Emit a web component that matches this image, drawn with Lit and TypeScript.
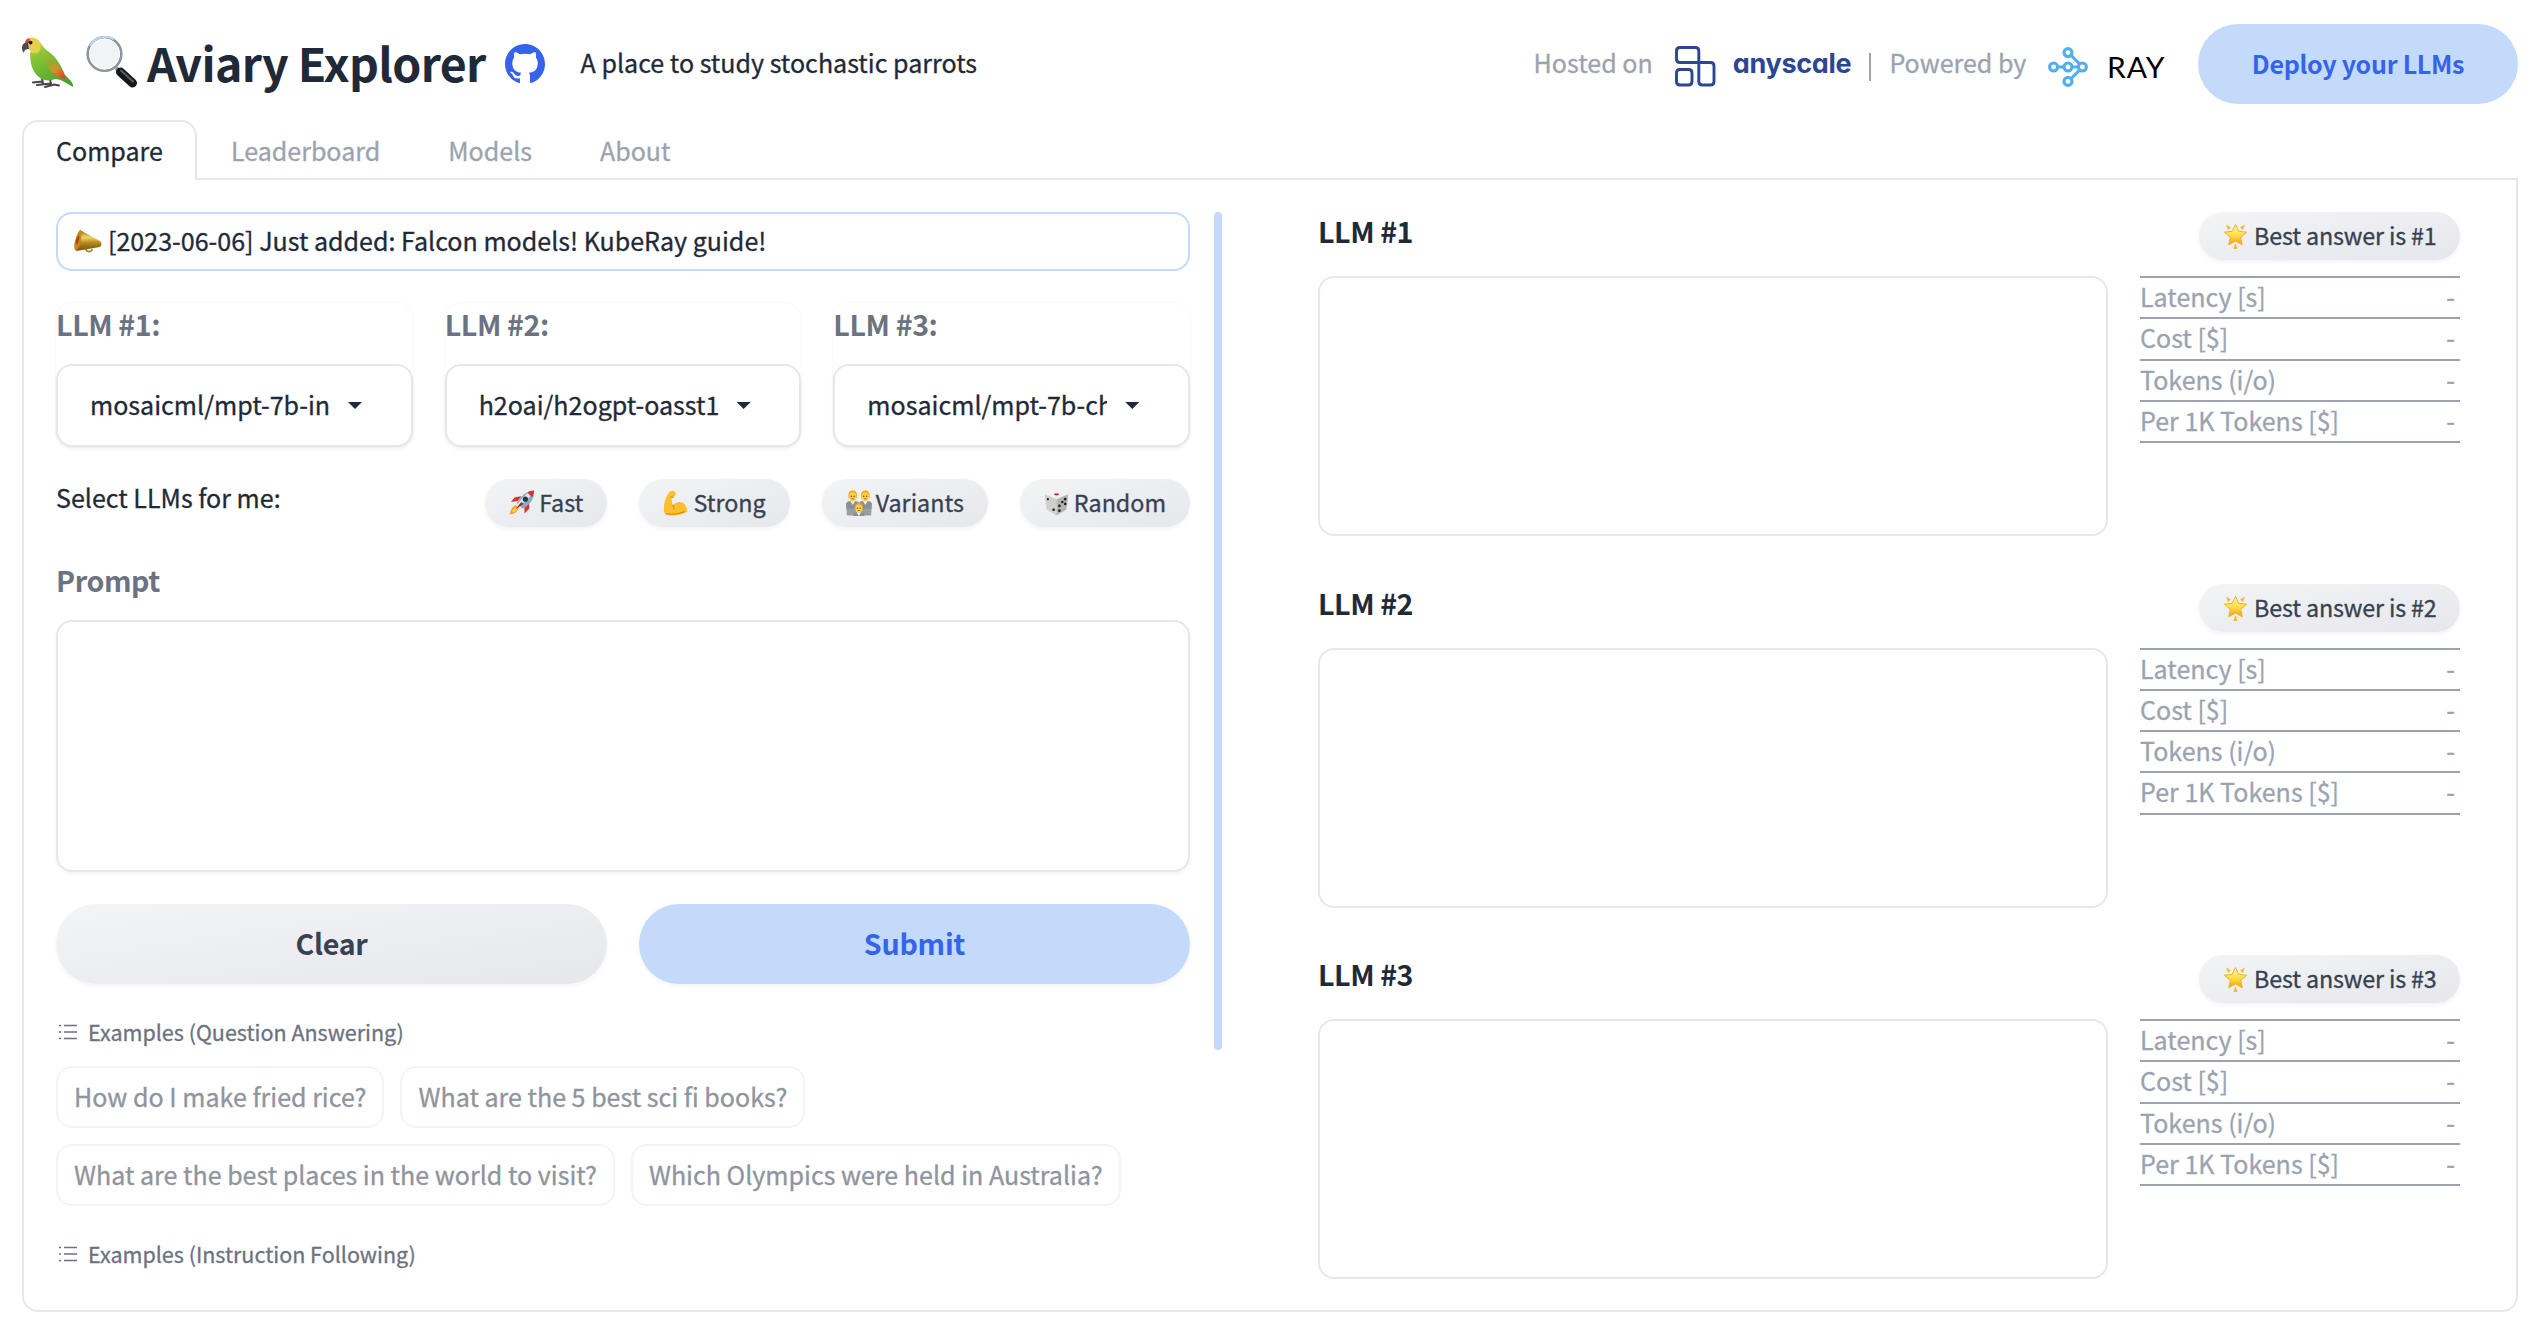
import { LitElement, html, svg, css } from "lit";
import { customElement, state } from "lit/decorators.js";

const parrot = html`<svg class="parrot" width="53" height="52" viewBox="0 0 53 52">
  <defs>
    <linearGradient id="pb" x1="0.2" y1="0" x2="0.8" y2="1">
      <stop offset="0" stop-color="#b9cf3a" /><stop offset=".25" stop-color="#84c437" /><stop offset="1" stop-color="#459f2a" />
    </linearGradient>
    <linearGradient id="pw" x1="0.1" y1="0" x2="0.8" y2="1">
      <stop offset="0" stop-color="#8ecb38" /><stop offset=".45" stop-color="#8fae2c" /><stop offset=".7" stop-color="#dd8a2c" /><stop offset="1" stop-color="#df4426" />
    </linearGradient>
  </defs>
  <path d="M11 45.500l9-1m-5 3.500l14-1.500m-9-6l1 7m7-7l1 8m-6 1.500l9-2.500 5 1" stroke="#4b4247" stroke-width="2" fill="none" stroke-linecap="round" />
  <path d="M8 16C8 26 10 35 18 41c5 3 11 3 15 1 6 0 11 4 18 8 1-4-4-8-8-12C39 28 34 20 27 15 23 12 20 9 18 5z" fill="url(#pb)" />
  <path d="M18 13c9 3 14 9 18 15 3 4 7 9 8 14-7-1-12-5-16-9-5-5-9-12-10-20z" fill="url(#pw)" />
  <path d="M4 3C8-1 14 0 17 4c3 5 2 10-2 12-4 1-7-1-8-4z" fill="#e6d04a" />
  <path d="M3 5c1-3 3-4 5-3.500L7 6 4 7z" fill="#e5432d" />
  <path d="M6 6C2 5 0 8 0 11c0 2 1 4 2 5 0-3 2-4 5-4z" fill="#4a4a50" />
  <circle cx="8.600" cy="5.600" r="1.900" fill="#1d1a16" />
</svg>`;

const magnifier = html`<svg class="magnifier" width="52" height="52" viewBox="0 0 52 52">
  <path d="M30 32l5 4" stroke="#8c8f93" stroke-width="4" />
  <path d="M34.500 36L46.500 47" stroke="#15171a" stroke-width="9" stroke-linecap="round" />
  <path d="M35 34.500L47 45.500" stroke="#5a6065" stroke-width="2" stroke-linecap="round" />
  <circle cx="18.500" cy="18" r="16.800" fill="#f2f3f4" stroke="#8c959c" stroke-width="2.600" />
  <path d="M4 10A17 17 0 0 1 28 3.500" stroke="#b9daf2" stroke-width="2" fill="none" />
  <circle cx="18.500" cy="18" r="15" fill="none" stroke="#fff" stroke-width="1" />
</svg>`;

const github = html`<svg class="github" width="40" height="40" viewBox="0 0 16 16" fill="#3563e9">
  <path d="M8 0C3.580 0 0 3.580 0 8c0 3.540 2.290 6.530 5.470 7.590.4.070.55-.17.55-.38 0-.19-.01-.82-.01-1.490-2.010.37-2.530-.49-2.690-.94-.09-.23-.48-.94-.82-1.130-.28-.15-.68-.52-.01-.53.63-.01 1.080.58 1.230.82.72 1.210 1.870.87 2.330.66.070-.52.28-.87.51-1.070-1.780-.2-3.640-.89-3.640-3.950 0-.87.31-1.590.82-2.150-.08-.2-.36-1.020.08-2.120 0 0 .67-.21 2.200.82.64-.18 1.320-.27 2-.27s1.360.090 2 .27c1.530-1.040 2.200-.82 2.200-.82.44 1.100.16 1.920.080 2.120.51.560.82 1.270.82 2.150 0 3.070-1.870 3.750-3.650 3.950.29.250.54.730.54 1.480 0 1.070-.01 1.930-.01 2.200 0 .21.15.46.55.38A8.010 8.010 0 0 0 16 8c0-4.420-3.580-8-8-8z" />
</svg>`;

const anyscaleMark = html`<svg class="any-mark" width="41" height="41" viewBox="0 0 41 41" fill="none" stroke="#2b4794" stroke-width="2.900">
  <path d="M23.800 16.500V5q0-3.500-3.500-3.500H5Q1.500 1.500 1.500 5v8q0 3.500 3.500 3.500h30.500q3.500 0 3.500 3.500v15.500q0 3.500-3.500 3.500h-8.200q-3.500 0-3.500-3.500z" />
  <path d="M5 23.500h8.500q3.500 0 3.500 3.500v8.500q0 3.500-3.500 3.500H5q-3.500 0-3.500-3.500V27q0-3.500 3.500-3.500z" />
</svg>`;

const rayMark = html`<svg class="ray-mark" width="40" height="40" viewBox="0 0 40 40" fill="none" stroke="#52aeee" stroke-width="3.100">
  <path d="M9.500 20h6M24.500 20h6M23.200 8.500l8.600 8.600M23.200 31.500l8.600-8.600" />
  <circle cx="20" cy="5.600" r="4" /><circle cx="20" cy="20" r="4" /><circle cx="20" cy="34.400" r="4" />
  <circle cx="5.600" cy="20" r="4" /><circle cx="34.400" cy="20" r="4" />
</svg>`;

const megaphone = html`<svg class="megaphone" width="28" height="25" viewBox="0 0 28 25">
  <defs><linearGradient id="mg" x1="0" y1="0" x2="0" y2="1"><stop offset="0" stop-color="#8a6a12" /><stop offset=".35" stop-color="#f0d667" /><stop offset=".6" stop-color="#b88a1c" /><stop offset="1" stop-color="#6d500c" /></linearGradient></defs>
  <path d="M12 20c0 3 6 4 6 0" fill="none" stroke="#a8821e" stroke-width="1.600" />
  <path d="M6 1l20 11q3 3 0 6L2 22z" fill="url(#mg)" />
  <path d="M6 1q2 1 1 9T2 22Q-1 20 1 12T6 1z" fill="#c28a1c" />
  <path d="M5 6q1 3-2 10-2-2-1-5t3-5z" fill="#b3401b" />
</svg>`;

const rocket = html`<svg class="pic" width="26" height="26" viewBox="0 0 27 26">
  <path d="M9 11l-7 1 4-5 7-1zM16 17l0 7 5-5 0-7z" fill="#d8332b" />
  <path d="M7 15Q2 17 1 25q7-1 9-7z" fill="#f59a23" /><path d="M7 17q-3 2-4 6 4-1 6-4z" fill="#ffe14d" />
  <path d="M26 0q-10 0-18 13l6 6Q27 12 26 0z" fill="#8fa9bd" /><path d="M26 0q-8 1-17 14l2 2Q22 8 26 0z" fill="#dbe7f0" />
  <path d="M26 0q-4 0-7 2l5 5q2-4 2-7z" fill="#d8332b" />
  <circle cx="17" cy="9" r="2.700" fill="#24394e" /><path d="M6 20l7-8 2 2z" fill="#a81f1f" />
</svg>`;

const muscle = html`<svg class="pic" width="26" height="26" viewBox="0 0 27 26">
  <path d="M6 2q3-3 6-1 2 1 1 4l-2 2-2 0q0 5 1 8 6-5 11-2 4 3 4 9-8 4-16 4-7 0-8-4Q0 12 6 2z" fill="#fdbf2d" />
  <path d="M11 7L8 7M10 15q2 2 1 4M3 24q9 2 20-2" stroke="#dc8a17" stroke-width="1.300" fill="none" />
</svg>`;

const person = (x: number, y: number, s: number) => svg`<g transform="translate(${x} ${y}) scale(${s})">
  <path d="M0 19V14q0-3 4-3h5q4 0 4 3v5z" fill="#8b8f95" /><path d="M4 11h5l-2.500 4z" fill="#f2f2f2" />
  <path d="M2 5q0-5 4.500-5T11 5v3H2z" fill="#f3a51e" /><ellipse cx="6.500" cy="6.500" rx="3.900" ry="4.700" fill="#ffd04a" />
  <circle cx="5" cy="6" r=".7" fill="#473512" /><circle cx="8" cy="6" r=".7" fill="#473512" /><path d="M5 8.700h3" stroke="#8a4a14" stroke-width=".8" />
</g>`;
const family = html`<svg class="pic" width="26" height="26" viewBox="0 0 27 26">
  <path d="M0 13h12v13H1zM15 13h12l-1 13H15z" fill="#9a9da2" />
  ${person(0.5, 0, 1)}${person(13.5, 0, 1)}${person(7.5, 13, 0.9)}
</svg>`;

const die = html`<svg class="pic" width="26" height="26" viewBox="0 0 27 26">
  <path d="M13 0q2 0 12 4l-12 5L1 4Q11 0 13 0z" fill="#f3f3f1" /><path d="M1 4l12 5v17L3 20q-1-1-2-16z" fill="#cfcfcc" /><path d="M25 4L13 9v17l10-6q1-1 2-16z" fill="#b4b5b3" />
  <ellipse cx="13" cy="4" rx="2.600" ry="1.200" fill="#d42b2b" />
  <g fill="#222"><circle cx="4" cy="9" r="1.200" /><circle cx="10" cy="20" r="1.400" /><circle cx="16" cy="21" r="1.400" /><circle cx="16" cy="16" r="1.400" /><circle cx="22" cy="9" r="1.400" /><circle cx="22" cy="14" r="1.400" /><circle cx="19" cy="12" r="1.300" /></g>
</svg>`;

const star = html`<svg class="star" width="25" height="26" viewBox="0 0 25 26">
  <defs><linearGradient id="sg" x1="0" y1="0" x2="0" y2="1"><stop offset="0" stop-color="#fff6b8" /><stop offset=".5" stop-color="#fde04a" /><stop offset="1" stop-color="#f0a01c" /></linearGradient></defs>
  <path d="M3 1.500l5 3-3 2.500zM22 1.500l-5 3 3 2.500zM10.500 26l1.500-5h1l1.500 5z" fill="#f2bb32" />
  <path d="M12.500 1.500l3.200 6.800 8 .9-6 5.200 1.600 7.400-6.800-3.700-6.800 3.700 1.600-7.400-6-5.200 8-.9z" fill="url(#sg)" stroke="#efb12a" stroke-width="1" stroke-linejoin="round" />
</svg>`;

const listIcon = html`<svg class="list" width="18" height="16" viewBox="0 0 18 16" stroke="#6b7280" stroke-width="1.500">
  <path d="M5 1.500h13M5 8h13M5 14.500h13M0 1.500h2M0 8h2M0 14.500h2" />
</svg>`;

const TABS = ["Compare", "Leaderboard", "Models", "About"];
const MODELS = [
  { label: "LLM #1:", value: "mosaicml/mpt-7b-in" },
  { label: "LLM #2:", value: "h2oai/h2ogpt-oasst1" },
  { label: "LLM #3:", value: "mosaicml/mpt-7b-ch" },
];
const QUICK = [
  { icon: rocket, text: "Fast" },
  { icon: muscle, text: "Strong" },
  { icon: family, text: "Variants" },
  { icon: die, text: "Random" },
];
const QUESTIONS = [
  "How do I make fried rice?",
  "What are the 5 best sci fi books?",
  "What are the best places in the world to visit?",
  "Which Olympics were held in Australia?",
];
const STATS = ["Latency [s]", "Cost [$]", "Tokens (i/o)", "Per 1K Tokens [$]"];

@customElement("app-root")
export class AppRoot extends LitElement {
  @state() tab = 0;

  static styles = css`
    :host { display: block; box-sizing: border-box; width: 2538px; height: 1328px; overflow: hidden; background: #fff; color: #1f2937;
      font-family: "Noto Sans CJK SC", "Noto Sans", sans-serif; font-size: 25.060px; line-height: 40px; -webkit-text-stroke: 0.300px currentColor; }
    * { box-sizing: border-box; }
    svg { display: block; flex: none; }
    .header { display: flex; justify-content: space-between; height: 120px; padding: 24px 20px 16px 22px; align-items: center; }
    .brand, .hosting { display: flex; align-items: center; height: 80px; white-space: nowrap; }
    .title, .label, .act, .deploy, .head, .any-name, .ray-name { -webkit-text-stroke: 0; }
    .title { font-size: 46.500px; font-weight: 700; letter-spacing: -0.690px; margin: 0 0 4px 9px; line-height: 60px; }
    .magnifier { margin-left: 11px; margin-bottom: 4px; }
    .parrot { margin-bottom: 2px; }
    .github { margin-left: 19px; }
    .tagline { margin: 0 0 4px 36px; }
    .muted { color: #9ca3af; margin-bottom: 4px; }
    .any-mark { margin-left: 22px; margin-top: 5px; }
    .any-name { font-family: "Inter", sans-serif; font-feature-settings: "cv11"; font-weight: 700; font-size: 27px; letter-spacing: -0.300px; color: #2b4794; margin-left: 17px; margin-bottom: 1px; }
    .bar { width: 2px; height: 28px; background: #9ca3af; margin: 6px 18px 0 18px; }
    .ray-mark { margin-left: 22px; margin-top: 5px; }
    .ray-name { font-family: "Lato", sans-serif; font-size: 28px; width: 61.600px; letter-spacing: 0.800px; transform: scaleX(1.07); transform-origin: 0 50%; color: #000; margin-left: 19px; margin-top: 5px; }
    .deploy { width: 320px; height: 80px; margin-left: 29px; border-radius: 40px; background: #c3dafa; color: #3563e9; font-weight: 700; letter-spacing: -0.300px; text-align: center; line-height: 78px; }
    .tabs { display: flex; height: 60px; margin: 0 20px 0 22px; }
    .tab { border-bottom: 2px solid #e5e7eb; padding: 2px 34px 0; line-height: 56px; color: #9ca3af; white-space: nowrap; }
    .tab.on { border: 2px solid #e5e7eb; border-bottom: none; padding: 0 32px; border-radius: 16px 16px 0 0; color: #1f2937; }
    .fill { flex: 1; border-bottom: 2px solid #e5e7eb; }
    .panel { display: flex; height: 1132px; margin: 0 20px 0 22px; padding: 32px 56px 0 32px; border: 2px solid #e5e7eb; border-top: none; border-radius: 0 0 16px 16px; }
    .left { width: 1134px; display: flex; flex-direction: column; }
    .news { display: flex; align-items: center; height: 59px; border: 2px solid #c3dafa; border-radius: 16px; padding: 0 16px; }
    .news .say { margin: 0 0 3px 6px; }
    .selects { display: grid; grid-template-columns: repeat(3, 1fr); gap: 32px; margin-top: 32px; height: 144px; }
    .sel { display: flex; flex-direction: column; justify-content: space-between; border-radius: 16px; box-shadow: 0 0 0 1px #fafafb; }
    .label { font-size: 28.600px; font-weight: 700; letter-spacing: -0.400px; color: #6b7280; }
    .sel .label { padding-top: 1px; }
    .drop { display: flex; align-items: center; height: 83px; border: 2px solid #e5e7eb; border-radius: 16px; padding-left: 32px; background: #fff; box-shadow: 0 2px 4px rgba(0,0,0,.05); }
    .value { width: 240px; overflow: hidden; white-space: nowrap; margin-bottom: 3px; }
    .caret { width: 14px; height: 7px; margin-left: 18px; background: #1f2937; clip-path: polygon(0 0, 100% 0, 50% 100%); }
    .quick { display: flex; justify-content: space-between; height: 48px; margin-top: 32px; }
    .quick .say { line-height: 37px; }
    .pills { display: flex; gap: 32px; }
    .pill { display: flex; align-items: center; height: 48px; border-radius: 24px; padding: 0 24px; background: linear-gradient(to bottom right, #f3f4f6, #e5e7eb); box-shadow: 0 2px 4px rgba(0,0,0,.05); color: #374151; font-size: 23.300px; white-space: nowrap; }
    .pill .t { margin: 0 0 2px 4px; }
    .prompt-label { margin-top: 32px; line-height: 41px; height: 41px; }
    .area { height: 252px; margin-top: 20px; border: 2px solid #e5e7eb; border-radius: 16px; box-shadow: 0 2px 4px rgba(0,0,0,.05); }
    .actions { display: grid; grid-template-columns: 1fr 1fr; gap: 32px; margin-top: 32px; }
    .act { height: 80px; border-radius: 40px; text-align: center; line-height: 78px; font-size: 28.600px; font-weight: 700; letter-spacing: -0.250px; color: #374151; background: linear-gradient(to bottom right, #f3f4f6, #e5e7eb); box-shadow: 0 2px 4px rgba(0,0,0,.05); }
    .act.go { background: #c3dafa; color: #3563e9; }
    .ex { display: flex; align-items: center; height: 34px; margin-top: 31px; padding-left: 3px; color: #6b7280; font-size: 21.500px; }
    .ex .t { margin-left: 11px; margin-bottom: 1px; }
    .chips { display: flex; flex-wrap: wrap; gap: 16px; margin-top: 17px; }
    .chip { height: 62px; border: 2px solid #f3f4f6; border-radius: 16px; padding: 0 16px; line-height: 56px; color: #8f949d; white-space: nowrap; }
    .rule { width: 8px; height: 838px; border-radius: 4px; background: #c3dafa; margin-left: 24px; }
    .right { width: 1142px; margin-left: 96px; }
    .result { display: grid; grid-template-columns: 790px 320px; gap: 32px; height: 371.500px; }
    .head { font-size: 28.600px; font-weight: 700; letter-spacing: -0.450px; line-height: 37px; height: 64px; }
    .out { height: 260px; border: 2px solid #e5e7eb; border-radius: 16px; }
    .best { margin-left: auto; width: 261px; margin-bottom: 16px; padding: 0 0 0 24px; letter-spacing: -0.140px; }
    .pill.best .t { margin-left: 6px; }
    .stats { border-bottom: 2px solid #9ca3af; }
    .stat { display: flex; justify-content: space-between; height: 41.250px; border-top: 2px solid #9ca3af; color: #9ca3af; padding: 0 5px 0 0; line-height: 36px; }
  `;

  render() {
    return html`
      <div class="header">
        <div class="brand">${parrot}${magnifier}<div class="title">Aviary Explorer</div>${github}<div class="tagline">A place to study stochastic parrots</div></div>
        <div class="hosting">
          <div class="muted">Hosted on</div>${anyscaleMark}<div class="any-name">anyscale</div>
          <div class="bar"></div>
          <div class="muted">Powered by</div>${rayMark}<div class="ray-name">RAY</div>
          <div class="deploy">Deploy your LLMs</div>
        </div>
      </div>
      <div class="tabs">
        ${TABS.map((t, i) => html`<div class="tab ${i === this.tab ? "on" : ""}" @click=${() => (this.tab = i)}>${t}</div>`)}
        <div class="fill"></div>
      </div>
      <div class="panel">
        <div class="left">
          <div class="news">${megaphone}<div class="say">[2023-06-06] Just added: Falcon models! KubeRay guide!</div></div>
          <div class="selects">
            ${MODELS.map((m) => html`<div class="sel"><div class="label">${m.label}</div><div class="drop"><div class="value">${m.value}</div><div class="caret"></div></div></div>`)}
          </div>
          <div class="quick">
            <div class="say">Select LLMs for me:</div>
            <div class="pills">${QUICK.map((q) => html`<div class="pill">${q.icon}<span class="t">${q.text}</span></div>`)}</div>
          </div>
          <div class="label prompt-label">Prompt</div>
          <div class="area"></div>
          <div class="actions"><div class="act">Clear</div><div class="act go">Submit</div></div>
          <div class="ex">${listIcon}<span class="t">Examples (Question Answering)</span></div>
          <div class="chips">${QUESTIONS.map((q) => html`<div class="chip">${q}</div>`)}</div>
          <div class="ex">${listIcon}<span class="t">Examples (Instruction Following)</span></div>
        </div>
        <div class="rule"></div>
        <div class="right">
          ${[1, 2, 3].map((n) => html`<div class="result">
            <div><div class="head">LLM #${n}</div><div class="out"></div></div>
            <div>
              <div class="pill best">${star}<span class="t">Best answer is #${n}</span></div>
              <div class="stats">${STATS.map((s) => html`<div class="stat"><span>${s}</span><span>-</span></div>`)}</div>
            </div>
          </div>`)}
        </div>
      </div>`;
  }
}
